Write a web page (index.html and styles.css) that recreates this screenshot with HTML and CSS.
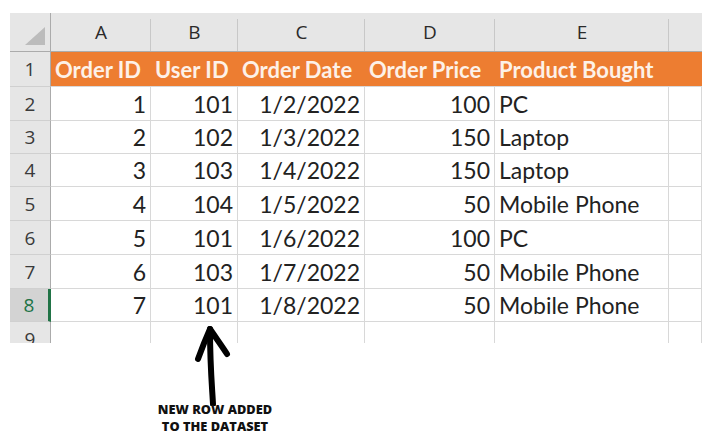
FILE: index.html
```html
<!DOCTYPE html>
<html lang="en">
<head>
  <meta charset="UTF-8" />
  <title>Orders sheet</title>
  <link rel="stylesheet" href="styles.css">
</head>
<body>
  <div class="sheet">
    <div class="grid">
      <div class="corner"><span class="tri"></span></div>
      <div class="colhead">A</div>
      <div class="colhead">B</div>
      <div class="colhead">C</div>
      <div class="colhead">D</div>
      <div class="colhead">E</div>
      <div class="colhead"></div>

      <div class="rowhead">1</div>
      <div class="cell th">Order ID</div>
      <div class="cell th">User ID</div>
      <div class="cell th">Order Date</div>
      <div class="cell th">Order Price</div>
      <div class="cell th">Product Bought</div>
      <div class="cell th"></div>

      <div class="rowhead">2</div>
      <div class="cell num">1</div>
      <div class="cell num">101</div>
      <div class="cell num">1/2/2022</div>
      <div class="cell num">100</div>
      <div class="cell">PC</div>
      <div class="cell"></div>

      <div class="rowhead">3</div>
      <div class="cell num">2</div>
      <div class="cell num">102</div>
      <div class="cell num">1/3/2022</div>
      <div class="cell num">150</div>
      <div class="cell">Laptop</div>
      <div class="cell"></div>

      <div class="rowhead">4</div>
      <div class="cell num">3</div>
      <div class="cell num">103</div>
      <div class="cell num">1/4/2022</div>
      <div class="cell num">150</div>
      <div class="cell">Laptop</div>
      <div class="cell"></div>

      <div class="rowhead">5</div>
      <div class="cell num">4</div>
      <div class="cell num">104</div>
      <div class="cell num">1/5/2022</div>
      <div class="cell num">50</div>
      <div class="cell">Mobile Phone</div>
      <div class="cell"></div>

      <div class="rowhead">6</div>
      <div class="cell num">5</div>
      <div class="cell num">101</div>
      <div class="cell num">1/6/2022</div>
      <div class="cell num">100</div>
      <div class="cell">PC</div>
      <div class="cell"></div>

      <div class="rowhead">7</div>
      <div class="cell num">6</div>
      <div class="cell num">103</div>
      <div class="cell num">1/7/2022</div>
      <div class="cell num">50</div>
      <div class="cell">Mobile Phone</div>
      <div class="cell"></div>

      <div class="rowhead active">8</div>
      <div class="cell num">7</div>
      <div class="cell num">101</div>
      <div class="cell num">1/8/2022</div>
      <div class="cell num">50</div>
      <div class="cell">Mobile Phone</div>
      <div class="cell"></div>

      <div class="rowhead">9</div>
      <div class="cell"></div>
      <div class="cell"></div>
      <div class="cell"></div>
      <div class="cell"></div>
      <div class="cell"></div>
      <div class="cell"></div>
    </div>
  </div>

  <div class="note">
    <svg class="arrow" width="140" height="80" viewBox="0 0 140 80">
      <path d="M68 78 C67 60 65 40 65 3" />
      <path d="M53 33 C57 22 61 12 65 3 C71 12 77 20 82 28" />
    </svg>
    <div class="note-text">NEW ROW ADDED<br/>TO THE DATASET</div>
  </div>
</body>
</html>
```

FILE: styles.css
```css
body {
  margin: 0;
  background: #ffffff;
  font-family: 'Lato', 'Open Sans', sans-serif;
}
.sheet {
  padding: 13px 0 0 10px;
}
.grid {
  display: grid;
  grid-template-columns: 41px 100px 87px 127px 130px 174px 33px;
  grid-template-rows: 39px 35px 34px 33px 33px 34px 34px 34px 33px 34px;
  width: 692px;
  height: 330px;
  overflow: hidden;
  font-size: 23px;
  color: #222;
}
.corner {
  position: relative;
  background: #e6e6e6;
  border-right: 1px solid #ababab;
  border-bottom: 1px solid #ababab;
}
.tri {
  position: absolute;
  right: 5px;
  bottom: 6px;
  width: 0;
  height: 0;
  border-left: 20px solid transparent;
  border-bottom: 18px solid #bcbcbc;
}
.colhead {
  position: relative;
  background: #e6e6e6;
  border-bottom: 1px solid #ababab;
  display: flex;
  align-items: center;
  justify-content: center;
  color: #2a2a2a;
  font-family: 'Open Sans', sans-serif;
  font-size: 19px;
}
.colhead::after {
  content: '';
  position: absolute;
  right: 0;
  top: 6px;
  bottom: 0;
  width: 1px;
  background: #c8c8c8;
}
.colhead:nth-child(7)::after {
  display: none;
}
.rowhead {
  background: #e6e6e6;
  border-right: 1px solid #ababab;
  border-bottom: 1px solid #d0d0d0;
  display: flex;
  align-items: center;
  justify-content: center;
  color: #3a3a3a;
  font-family: 'Open Sans', sans-serif;
  font-size: 19px;
}
.rowhead.active {
  background: #d3d3d3;
  color: #217346;
  border-right: 3px solid #217346;
}
.cell {
  display: flex;
  align-items: center;
  padding: 0 4px;
  border-right: 1px solid #d8d8d8;
  border-bottom: 1px solid #d8d8d8;
  white-space: nowrap;
}
.cell.num {
  justify-content: flex-end;
}
.cell.th {
  background: #ed7d31;
  color: #fdf1e8;
  font-weight: bold;
  font-size: 22px;
  border-right: none;
}
.note {
  width: 140px;
  margin: -17px 0 0 145px;
  text-align: center;
}
.arrow {
  display: block;
}
.arrow path {
  fill: none;
  stroke: #000;
  stroke-width: 6;
  stroke-linecap: round;
  stroke-linejoin: round;
}
.note-text {
  margin-top: -5px;
  font-family: 'Open Sans', sans-serif;
  font-weight: 800;
  font-size: 12.8px;
  line-height: 17px;
  color: #111;
}
```
